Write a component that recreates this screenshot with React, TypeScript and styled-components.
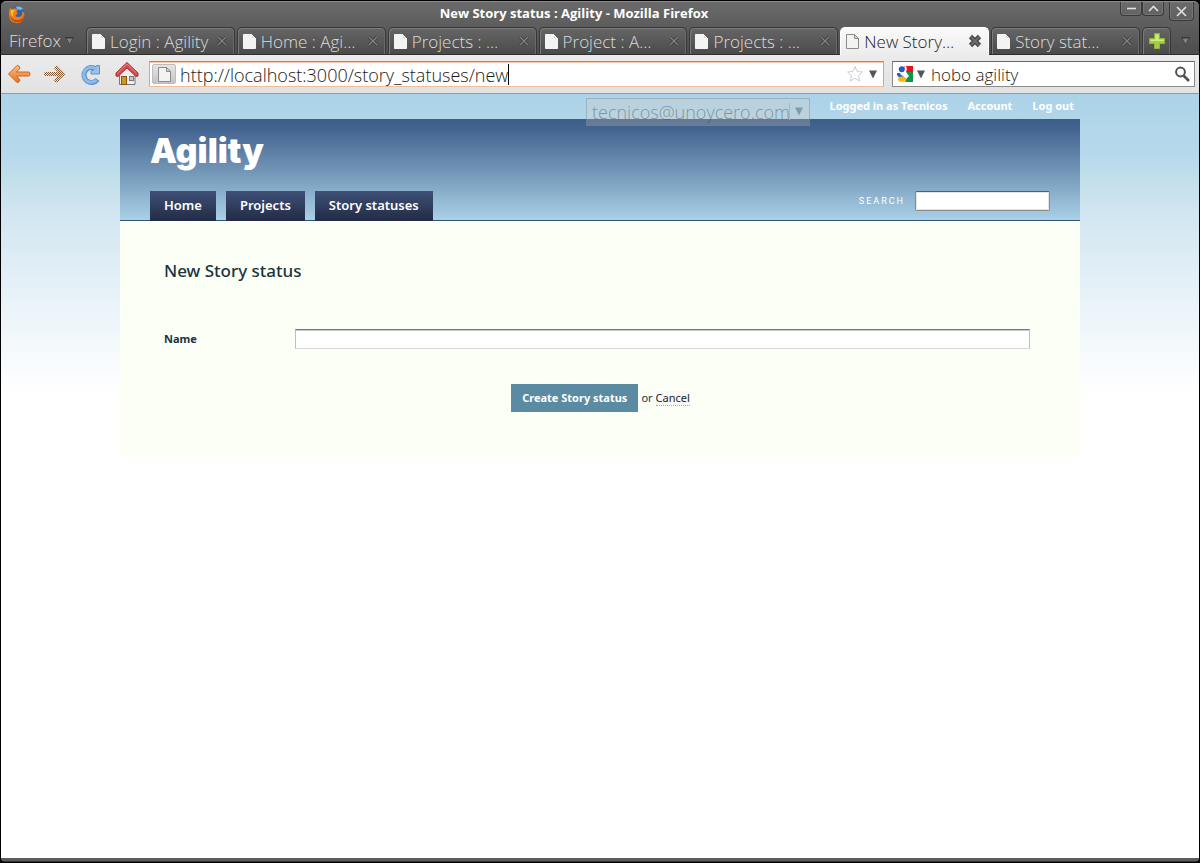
import React from "react";
import styled, { createGlobalStyle, css } from "styled-components";

const chromeFont = '"Open Sans", "Noto Sans", sans-serif';
const pageFont = '"Noto Sans", "Open Sans", sans-serif';

const GlobalStyle = createGlobalStyle`
  *, *::before, *::after { box-sizing: border-box; }
  body { margin: 0; background: #000; }
  button, input, select { font: inherit; color: inherit; margin: 0; padding: 0; border: 0; border-radius: 0; outline: 0; }
  button { background: none; cursor: pointer; }
  a { color: inherit; text-decoration: none; }
  svg { display: block; flex: none; }
`;

const Window = styled.div`
  display: flex;
  flex-direction: column;
  min-height: 100vh;
  padding: 0 1px 1px;
  background: #000;
  font-family: ${chromeFont};
`;

const Frame = styled.header`
  display: flex;
  flex-direction: column;
  margin-top: 1px;
  border-top: 1px solid #8a8a8a;
  border-radius: 5px 5px 0 0;
  background: linear-gradient(#6a6a6a, #4c4c4c);
`;

const TitleBar = styled.div`
  display: grid;
  grid-template-columns: 1fr auto 1fr;
  height: 25px;
  padding: 0 7px;
`;

const BrowserLogo = styled.div`
  padding-top: 3px;
`;

const WindowTitle = styled.div`
  padding-right: 52px;
  color: #fff;
  font: 700 13px/22px ${chromeFont};
  white-space: nowrap;
`;

const WindowButtons = styled.div`
  display: flex;
  justify-content: flex-end;
  align-items: flex-start;
`;

const WindowButton = styled.button<{ $close?: boolean }>`
  display: flex;
  align-items: center;
  justify-content: center;
  width: ${(p) => (p.$close ? 25 : 22)}px;
  height: ${(p) => (p.$close ? 19 : 14)}px;
  margin-left: ${(p) => (p.$close ? 5 : 0)}px;
  margin-right: ${(p) => (p.$close ? -2 : 0)}px;
  border: 1px solid #3a3a3a;
  border-top: 0;
  border-radius: 0 0 4px 4px;
  box-shadow: inset 0 0 0 1px #747474;
`;

const TabStrip = styled.nav`
  display: flex;
  height: 28px;
  border-bottom: 1px solid #2e2e2e;
`;

const AppMenu = styled.button`
  display: flex;
  align-items: center;
  gap: 4px;
  width: 85px;
  padding-left: 8px;
  color: #dedede;
  font: 300 17px/26px ${chromeFont};
`;

const Tabs = styled.div`
  display: flex;
  flex: 1;
  gap: 2px;
  min-width: 0;
`;

const tabSurface = css`
  border: 1px solid #373737;
  border-bottom: 0;
  border-radius: 5px 5px 0 0;
  background: linear-gradient(#666, #4a4a4a);
  box-shadow: inset 1px 1px 0 #7b7b7b, inset -1px 0 0 #6a6a6a;
`;

const Tab = styled.div<{ $active?: boolean }>`
  ${tabSurface}
  display: flex;
  align-items: center;
  flex: 1;
  min-width: 0;
  height: 27px;
  padding: 0 6px 0 4px;
  color: #dcdcdc;
  ${(p) =>
    p.$active &&
    css`
      height: 28px;
      padding-bottom: 1px;
      border-color: #fff;
      background: linear-gradient(#fafafa, #ececec);
      box-shadow: none;
      color: #1c1c1c;
    `}
`;

const TabTitle = styled.a`
  flex: 1;
  min-width: 0;
  margin-left: 4px;
  padding-top: 2px;
  font: 300 17px/24px ${chromeFont};
  white-space: nowrap;
`;

const NewTab = styled.button`
  ${tabSurface}
  display: flex;
  align-items: center;
  justify-content: center;
  width: 29px;
  margin-left: 2px;
`;

const TabList = styled.button`
  display: flex;
  align-items: center;
  justify-content: center;
  width: 28px;
`;

const Toolbar = styled.div`
  display: flex;
  align-items: center;
  height: 39px;
  padding: 0 4px 0 6px;
  border-bottom: 1px solid #9a9a9a;
  background: linear-gradient(#ebebeb, #e2e2e2);
  color: #1a1a1a;
`;

const ToolButton = styled.button`
  width: 24px;
  height: 24px;
  margin-right: 12px;
`;

const AddressBar = styled.form`
  display: flex;
  align-items: center;
  gap: 4px;
  flex: 1;
  min-width: 0;
  height: 26px;
  padding: 0 5px 0 2px;
  margin-left: -2px;
  border: 1px solid #e9a07c;
  border-top-color: #d07f60;
  border-bottom-color: #f0bd94;
  background: #fff;
  box-shadow: inset 0 1px 0 #f7c3a8;
`;

const SiteBadge = styled.span`
  display: flex;
  align-items: center;
  justify-content: center;
  width: 24px;
  height: 20px;
  border: 1px solid #bdbdbd;
  border-radius: 2px;
  background: linear-gradient(#e6e6e6, #c4c4c4);
`;

const AddressField = styled.div`
  display: flex;
  align-items: center;
  flex: 1;
  min-width: 0;
`;

const AddressInput = styled.input`
  field-sizing: content;
  padding-top: 2px;
  background: transparent;
  font: 300 18px/22px ${chromeFont};
`;

const Caret = styled.span`
  width: 1px;
  height: 21px;
  background: #000;
`;

const SearchBar = styled.form`
  display: flex;
  align-items: center;
  gap: 3px;
  width: 303px;
  height: 26px;
  margin-left: 8px;
  padding: 0 3px 0 4px;
  border: 1px solid #8b8b8b;
  border-top-color: #666;
  background: #fff;
`;

const SearchBarInput = styled.input`
  flex: 1;
  min-width: 0;
  margin-left: 2px;
  padding-top: 2px;
  background: transparent;
  font: 300 17px/22px ${chromeFont};
`;

const Viewport = styled.main`
  position: relative;
  flex: 1;
  background: #fff linear-gradient(#acd3e8 0, #b8d9ec 64px, #c3e0eb 88px, #d2e6f1 120px, #ecf5fa 220px, #fff 300px) no-repeat;
  font-family: ${pageFont};
`;

const GhostSelect = styled.select`
  position: absolute;
  top: 4px;
  left: 585px;
  width: 224px;
  height: 28px;
  padding: 0 0 0 5px;
  border: 1px solid rgba(110, 130, 145, 0.4);
  appearance: none;
  background: rgba(224, 203, 188, 0.25);
  color: rgba(50, 85, 110, 0.5);
  font: 300 18px/26px ${chromeFont};
`;

const GhostArrow = styled.span`
  position: absolute;
  top: 9px;
  left: 788px;
  padding: 4px 0 4px 4px;
  border-left: 1px solid #9bb8c7;
  pointer-events: none;
`;

const Page = styled.div`
  width: 90%;
  max-width: 960px;
  margin: 0 auto;
`;

const AccountNav = styled.nav`
  display: flex;
  justify-content: flex-end;
  gap: 20px;
  height: 25px;
  padding-right: 6px;
  color: #fff;
  font: 700 11px/24px ${pageFont};
`;

const PageHeader = styled.header`
  display: flex;
  flex-direction: column;
  justify-content: space-between;
  height: 102px;
  padding: 8px 30px 0;
  border-bottom: 1px solid #34566c;
  background: linear-gradient(#3b5e88, #43648f 10%, #a9d0e6);
`;

const SiteName = styled.h1`
  margin: 0;
  color: #fff;
  font: 900 34px/48px Inter, Roboto, sans-serif;
`;

const NavRow = styled.div`
  display: flex;
  align-items: flex-end;
  justify-content: space-between;
  margin-bottom: -1px;
`;

const MainNav = styled.nav`
  display: flex;
  gap: 10px;
`;

const NavLink = styled.a`
  height: 30px;
  padding: 0 14px;
  background: linear-gradient(#3e5076, #232b45);
  color: #fff;
  font: 600 13px/29px ${pageFont};
`;

const SiteSearch = styled.form`
  display: flex;
  align-items: center;
  gap: 10px;
  padding-bottom: 10px;
  color: #fff;
  font: 400 9px/20px Roboto, sans-serif;
  label { letter-spacing: 2px; }
  input {
    width: 135px;
    height: 20px;
    border: 1px solid #8c8c8c;
    border-top-color: #5c5c5c;
    border-radius: 2px;
    background: #fff;
    box-shadow: inset 0 0 0 1px #e4e4e4;
  }
`;

const Content = styled.section`
  padding: 38px 50px 45px 44px;
  background: #fcfff5;
  color: #193440;
`;

const Heading = styled.h2`
  margin: 0 0 46px;
  font: 500 17px/24px ${pageFont};
`;

const Field = styled.div`
  display: flex;
  align-items: center;
  font: 700 11px/20px ${pageFont};
  label { width: 131px; }
  input {
    flex: 1;
    height: 20px;
    border: 1px solid #bfbfbf;
    border-top-color: #777;
    border-bottom-color: #d6d6d6;
    background: #fff;
    box-shadow: inset 0 1px 0 #ccc;
  }
`;

const Actions = styled.div`
  display: flex;
  align-items: center;
  justify-content: center;
  gap: 3px;
  margin-top: 35px;
  padding-left: 7px;
  font: 400 11px/14px ${pageFont};
`;

const SubmitButton = styled.button`
  height: 28px;
  padding: 0 11px;
  background: #5b8ba3;
  color: #fff;
  font: 700 11px/28px ${pageFont};
`;

const CancelLink = styled.a`
  border-bottom: 1px dotted #aaa;
  background: #f8f8f8;
  color: #222;
`;

const BottomEdge = styled.div`
  height: 4px;
  border-radius: 0 0 4px 4px;
  background: linear-gradient(#5c5c5c 0 3px, #303030 3px);
`;

const FirefoxLogo = () => (
  <svg width="18" height="18" viewBox="0 0 18 18">
    <circle cx="9.5" cy="8" r="6.5" fill="#2d64ae" />
    <path d="M8 2c3-1 6 0 7 2l-3 1-3-1z" fill="#75bce8" />
    <path d="M2 3c1 1 2 1 3 1 2-1 4 0 5 1L8 7c2 0 2 2 0 3-1 1 0 2 2 2 3 0 5-2 4-6 2 1 3 3 2 6-1 4-4 6-7 6-5 0-8-3-8-8 0-3 0-5 1-7z" fill="#ee7d15" />
    <path d="M2 10c1 3 4 6 8 5 3 0 5-2 6-5 0 5-3 7-7 7-4 0-7-3-7-7z" fill="#c8430b" />
    <path d="M3 5c2 0 3 0 4 1-2 1-3 3-1 6-2-1-4-3-3-7z" fill="#ffc02c" />
  </svg>
);

const PageIcon = ({ outline = "#f4f4f4" }: { outline?: string }) => (
  <svg width="15" height="17" viewBox="0 0 15 17">
    <path d="M1.500 1.500h8l4 4v10h-12z" fill="#f3f3f1" stroke={outline} strokeLinejoin="round" />
    <path d="M9.500 1.500v4h4z" fill="#d8d8d4" stroke={outline} strokeLinejoin="round" />
  </svg>
);

const CloseIcon = ({ active }: { active?: boolean }) =>
  active ? (
    <svg width="14" height="14" viewBox="0 0 14 14">
      <path d="M2.500 2.500l9 9M11.500 2.500l-9 9" stroke="#444" strokeWidth="4.600" />
      <path d="M3 3l8 8M11 3l-8 8" stroke="#6c6c6c" strokeWidth="2.200" />
    </svg>
  ) : (
    <svg width="12" height="12" viewBox="0 0 12 12">
      <path d="M2 2l8 8M10 2l-8 8" stroke="#3c3c3c" strokeWidth="3" />
      <path d="M2 2l8 8M10 2l-8 8" stroke="#858585" strokeWidth="1.300" />
    </svg>
  );

const DownArrow = ({ fill = "#555" }: { fill?: string }) => (
  <svg width="10" height="9" viewBox="0 0 10 9">
    <path d="M1 .5h8l-4 8z" fill={fill} />
  </svg>
);

const MenuArrow = () => (
  <svg width="9" height="8" viewBox="0 0 9 8">
    <path d="M0 0h9l-4.500 8z" fill="#383838" />
    <path d="M1.500 1.500h6l-3 5.500z" fill="#808080" />
  </svg>
);

const BackIcon = ({ disabled }: { disabled?: boolean }) => (
  <svg width="24" height="24" viewBox="0 0 24 24">
    <defs>
      <linearGradient id="backFill" x2="0" y2="1">
        <stop stopColor="#fbc08a" />
        <stop offset="1" stopColor="#ea6f1d" />
      </linearGradient>
      <pattern id="forwardFill" width="2" height="2" patternUnits="userSpaceOnUse">
        <rect width="2" height="2" fill="#eadfd8" />
        <path d="M0 0h1v1h-1zM1 1h1v1h-1z" fill="#8a5a34" />
      </pattern>
    </defs>
    <path
      d="M1.500 12l8.500-8.500q2.500 0 3 2.500l-3.500 4h12q1.500 0 1.500 2t-1.500 2h-12l3.500 4q-.5 2.500-3 2.500z"
      transform={disabled ? "matrix(-1 0 0 1 24 0)" : undefined}
      fill={disabled ? "url(#forwardFill)" : "url(#backFill)"}
      stroke={disabled ? "none" : "#d2601d"}
      strokeLinejoin="round"
    />
  </svg>
);

const ReloadIcon = () => (
  <svg width="24" height="24" viewBox="0 0 24 24">
    <path d="M18.500 17.500A7.500 7.500 0 1 1 17 7" fill="none" stroke="#5a92d0" strokeWidth="5" />
    <path d="M20.500 3.500v8.500h-8.500v-3l3-1 2.500-4.500z" fill="#9dc3ec" stroke="#5a92d0" strokeLinejoin="round" />
    <path d="M17.500 18A7.500 7.500 0 1 1 17.500 7.500" fill="none" stroke="#8fbae8" strokeWidth="3" />
  </svg>
);

const HomeIcon = () => (
  <svg width="24" height="24" viewBox="0 0 24 24">
    <path d="M4.500 12l7.500-7.500 8 7.500v10.500h-15.500z" fill="#eee" stroke="#777" />
    <rect x="6.500" y="14.500" width="5" height="8" fill="#d09429" stroke="#885711" />
    <rect x="14.500" y="14.500" width="4" height="4" fill="#b6cde2" stroke="#777" />
    <path d="M12 .5l11 10.500v3l-2 .5-9-8.500-9 8.500-2-.5v-3z" fill="#d64b4b" stroke="#a93038" strokeLinejoin="round" />
    <path d="M2.500 11L12 2l9.500 9" fill="none" stroke="#e98580" />
  </svg>
);

const StarIcon = () => (
  <svg width="18" height="18" viewBox="0 0 18 18">
    <path d="M9 1.500l2.200 5 5.300.5-4 3.600 1.200 5.400L9 13.200 4.300 16l1.200-5.400-4-3.600 5.300-.5z" fill="#fff" stroke="#ccc" strokeLinejoin="round" />
  </svg>
);

const EngineIcon = () => (
  <svg width="16" height="16" viewBox="0 0 16 16">
    <path d="M7 0h9v6h-7z" fill="#e9131d" />
    <path d="M9 6h7v10h-8q3-5 1-10z" fill="#109548" />
    <circle cx="4.800" cy="3.200" r="3" fill="#1e5bc6" />
    <path d="M8 0q2 3 0 6l3 4-2 2" fill="none" stroke="#fff" strokeWidth="1.500" />
    <path d="M0 7h3q1 3 4 3l-2 1.500q-4 0-5-2.500z" fill="#2b62c5" />
    <ellipse cx="5" cy="13.200" rx="4" ry="2.600" fill="#f6b511" />
  </svg>
);

const SearchIcon = () => (
  <svg width="17" height="17" viewBox="0 0 17 17">
    <circle cx="6.500" cy="6" r="4.400" fill="#fff" stroke="#505050" strokeWidth="2" />
    <path d="M9.500 9.500l5.500 5.500" stroke="#505050" strokeWidth="2.600" />
  </svg>
);

const PlusIcon = () => (
  <svg width="16" height="16" viewBox="0 0 16 16">
    <path d="M5.500.5h5v5h5v5h-5v5h-5v-5h-5v-5h5z" fill="#a4cf3c" stroke="#8fb83a" strokeLinejoin="round" />
    <path d="M6.500 6.500v-5h3v5h5v1.500h-13v-1.500z" fill="#d3ec86" />
  </svg>
);

const GlyphIcon = ({ d }: { d: string }) => (
  <svg width="11" height="11" viewBox="0 0 11 11">
    <path d={d} fill="none" stroke="#e2e2e2" strokeWidth="1.600" />
  </svg>
);

const tabs = [
  { title: "Login : Agility" },
  { title: "Home : Agi…" },
  { title: "Projects : …" },
  { title: "Project : A…" },
  { title: "Projects : …" },
  { title: "New Story…", active: true },
  { title: "Story stat…" },
];

export default function App() {
  return (
    <>
      <GlobalStyle />
      <Window>
        <Frame>
          <TitleBar>
            <BrowserLogo>
              <FirefoxLogo />
            </BrowserLogo>
            <WindowTitle>New Story status : Agility - Mozilla Firefox</WindowTitle>
            <WindowButtons>
              <WindowButton aria-label="Minimize">
                <GlyphIcon d="M1 5.500h9" />
              </WindowButton>
              <WindowButton aria-label="Maximize">
                <GlyphIcon d="M1 8l4.500-4.500 4.500 4.500" />
              </WindowButton>
              <WindowButton $close aria-label="Close window">
                <GlyphIcon d="M1 1l9 9M10 1l-9 9" />
              </WindowButton>
            </WindowButtons>
          </TitleBar>
          <TabStrip>
            <AppMenu>
              Firefox
              <MenuArrow />
            </AppMenu>
            <Tabs>
              {tabs.map((tab, i) => (
                <Tab key={i} $active={tab.active}>
                  <PageIcon outline={tab.active ? "#8a8a86" : "#f4f4f4"} />
                  <TabTitle href="#">{tab.title}</TabTitle>
                  <button aria-label="Close tab">
                    <CloseIcon active={tab.active} />
                  </button>
                </Tab>
              ))}
            </Tabs>
            <NewTab aria-label="New tab">
              <PlusIcon />
            </NewTab>
            <TabList aria-label="List all tabs">
              <MenuArrow />
            </TabList>
          </TabStrip>
        </Frame>
        <Toolbar>
          <ToolButton aria-label="Back">
            <BackIcon />
          </ToolButton>
          <ToolButton aria-label="Forward">
            <BackIcon disabled />
          </ToolButton>
          <ToolButton aria-label="Reload">
            <ReloadIcon />
          </ToolButton>
          <ToolButton aria-label="Home">
            <HomeIcon />
          </ToolButton>
          <AddressBar>
            <SiteBadge>
              <PageIcon outline="#8a8a86" />
            </SiteBadge>
            <AddressField>
              <AddressInput aria-label="Address" defaultValue="http://localhost:3000/story_statuses/new" />
              <Caret />
            </AddressField>
            <StarIcon />
            <DownArrow />
          </AddressBar>
          <SearchBar>
            <EngineIcon />
            <DownArrow />
            <SearchBarInput aria-label="Web search" defaultValue="hobo agility" />
            <SearchIcon />
          </SearchBar>
        </Toolbar>
        <Viewport>
          <Page>
            <AccountNav>
              <a href="#">Logged in as Tecnicos</a>
              <a href="#">Account</a>
              <a href="#">Log out</a>
            </AccountNav>
            <PageHeader>
              <SiteName>Agility</SiteName>
              <NavRow>
                <MainNav>
                  <NavLink href="#">Home</NavLink>
                  <NavLink href="#">Projects</NavLink>
                  <NavLink href="#">Story statuses</NavLink>
                </MainNav>
                <SiteSearch>
                  <label htmlFor="site-search">SEARCH</label>
                  <input id="site-search" />
                </SiteSearch>
              </NavRow>
            </PageHeader>
            <Content>
              <Heading>New Story status</Heading>
              <Field>
                <label htmlFor="name">Name</label>
                <input id="name" />
              </Field>
              <Actions>
                <SubmitButton>Create Story status</SubmitButton>
                <span>or</span>
                <CancelLink href="#">Cancel</CancelLink>
              </Actions>
            </Content>
          </Page>
          <GhostSelect aria-label="User" defaultValue="tecnicos@unoycero.com">
            <option>tecnicos@unoycero.com</option>
          </GhostSelect>
          <GhostArrow>
            <DownArrow fill="#7f9dad" />
          </GhostArrow>
        </Viewport>
        <BottomEdge />
      </Window>
    </>
  );
}
